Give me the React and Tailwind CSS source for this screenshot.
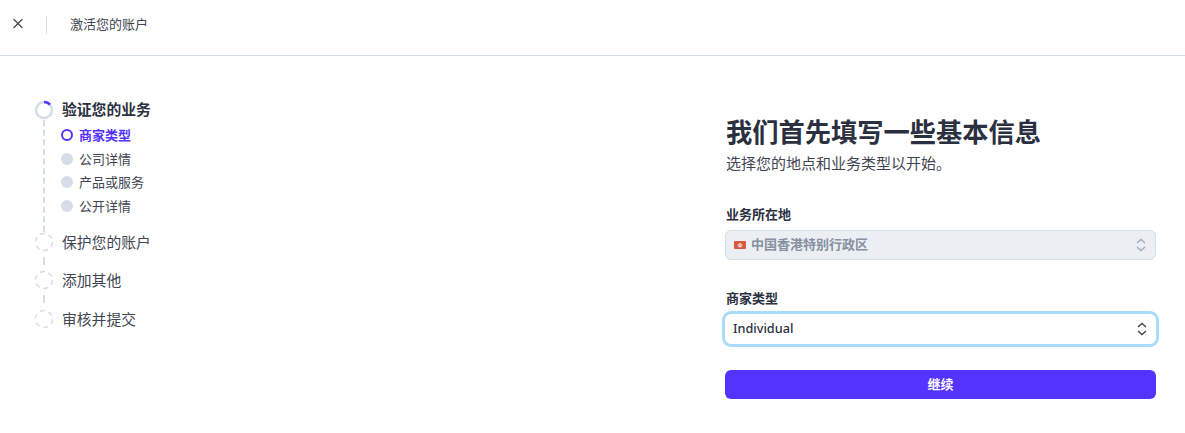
import { X } from "lucide-react";

const FONT = "font-['Noto_Sans','Noto_Sans_CJK_SC',sans-serif]";

const SUB_STEPS = [
  { label: "商家类型", active: true },
  { label: "公司详情" },
  { label: "产品或服务" },
  { label: "公开详情" },
];

function Chevrons({ className }) {
  return (
    <svg width="12" height="14" viewBox="0 0 12 14" fill="none" stroke="currentColor" strokeWidth="1.4" className={className}>
      <path d="M2 5 L6 1.5 L10 5" />
      <path d="M2 9 L6 12.5 L10 9" />
    </svg>
  );
}

function DashedCircle() {
  return (
    <svg width="20" height="20" viewBox="0 0 20 20" fill="none" className="shrink-0">
      <circle cx="10" cy="10" r="8.5" stroke="#d5dde7" strokeWidth="1.5" strokeDasharray="5 3.9" />
    </svg>
  );
}

function ActiveCircle() {
  return (
    <svg width="20" height="20" viewBox="0 0 20 20" fill="none" className="shrink-0">
      <circle cx="10" cy="10" r="8" stroke="#d5dde7" strokeWidth="2.5" />
      <path d="M10 2 A8 8 0 0 1 16 4.7" stroke="#5433ff" strokeWidth="2.5" />
    </svg>
  );
}

function Connector({ className }) {
  return <div className={`ml-[9px] w-0 border-l-2 border-dashed border-[#d5dde7] ${className}`} />;
}

function Step({ label, bold }) {
  return (
    <div className="flex items-center gap-2 h-5">
      {bold ? <ActiveCircle /> : <DashedCircle />}
      <span className={`text-[14.8px] leading-5 ${bold ? "font-semibold text-[#2b3040] mb-[2px]" : "text-[#414552]"}`}>{label}</span>
    </div>
  );
}

function Stepper() {
  return (
    <aside className="pl-[34px] pt-[44px] w-[300px]">
      <Step label="验证您的业务" bold />
      <div className="flex">
        <Connector className="h-[112px]" />
        <div className="ml-[16px] flex flex-col gap-[5.67px] pt-[6px]">
          {SUB_STEPS.map((s) => (
            <div key={s.label} className="flex items-center gap-[6px] h-[18px]">
              {s.active ? (
                <span className="w-3 h-3 rounded-full border-2 border-[#5433ff]" />
              ) : (
                <span className="w-3 h-3 rounded-full bg-[#d5dde7]" />
              )}
              <span className={`text-[13px] leading-[18px] ${s.active ? "font-bold text-[#5433ff]" : "text-[#414552]"}`}>{s.label}</span>
            </div>
          ))}
        </div>
      </div>
      <Step label="保护您的账户" />
      <Connector className="h-[8px] my-[5px]" />
      <Step label="添加其他" />
      <Connector className="h-[8px] mt-[5px] mb-[6px]" />
      <Step label="审核并提交" />
    </aside>
  );
}

function Form() {
  return (
    <section className="w-[431px] pt-[60px]">
      <h1 className="pl-px text-[26.25px] leading-[32px] font-bold text-[#2b3040]">我们首先填写一些基本信息</h1>
      <p className="pl-px mt-[5px] text-[15px] leading-5 text-[#414552]">选择您的地点和业务类型以开始。</p>

      <label className="block pl-px mt-[32px] text-[13px] leading-[18px] font-semibold text-[#2b3040]">业务所在地</label>
      <div className="mt-[7px] h-[30px] flex items-center justify-between pl-2 pr-[8px] rounded-md border border-[#d5dde7] bg-[#ebeff4]">
        <div className="flex items-center gap-[5px]">
          <span className="w-3 h-2 rounded-[1px] bg-[#d9573f] flex items-center justify-center text-[5px] leading-none text-white/80">✿</span>
          <span className="text-[13px] font-semibold text-[#87909f]">中国香港特别行政区</span>
        </div>
        <Chevrons className="text-[#a3acba]" />
      </div>

      <label className="block pl-px mt-[29px] text-[13px] leading-[18px] font-semibold text-[#2b3040]">商家类型</label>
      <div className="mt-[7px] h-[30px] flex items-center justify-between pl-2 pr-[8px] rounded-md bg-white shadow-[0_0_0_3px_#a9dcf9,0_1px_2px_rgba(0,0,0,0.2)]">
        <span className="text-[12.7px] font-medium text-[#2b3040]">Individual</span>
        <Chevrons className="text-[#414552]" />
      </div>

      <button className="mt-[26px] w-full h-[29px] rounded-md bg-[#5433ff] text-white text-[13px] font-bold">继续</button>
    </section>
  );
}

export default function App() {
  return (
    <div className={`${FONT} w-[1185px] h-[433px] bg-white overflow-hidden`}>
      <header className="h-[56px] border-b border-[#d5dde7] flex items-center pb-[6px]">
        <button className="ml-[10px] mb-[2px] w-4 h-4 flex items-center justify-center text-[#414552]">
          <X size={17} strokeWidth={1.8} />
        </button>
        <div className="ml-[20px] w-px h-[18px] bg-[#d5dde7]" />
        <span className="ml-[23px] text-[13px] text-[#414552]">激活您的账户</span>
      </header>
      <main className="flex justify-between pr-[29px]">
        <Stepper />
        <Form />
      </main>
    </div>
  );
}
